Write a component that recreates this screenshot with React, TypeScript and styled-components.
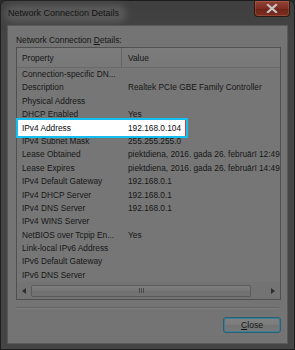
import React from 'react';
import styled, { createGlobalStyle } from 'styled-components';

type TRow = {
  property: string;
  value?: string;
  highlighted?: boolean;
};

const rows: TRow[] = [
  { property: 'Connection-specific DN...' },
  { property: 'Description', value: 'Realtek PCIe GBE Family Controller' },
  { property: 'Physical Address' },
  { property: 'DHCP Enabled', value: 'Yes' },
  { property: 'IPv4 Address', value: '192.168.0.104', highlighted: true },
  { property: 'IPv4 Subnet Mask', value: '255.255.255.0' },
  { property: 'Lease Obtained', value: 'piektdiena, 2016. gada 26. februārī 12:49:19' },
  { property: 'Lease Expires', value: 'piektdiena, 2016. gada 26. februārī 14:49:19' },
  { property: 'IPv4 Default Gateway', value: '192.168.0.1' },
  { property: 'IPv4 DHCP Server', value: '192.168.0.1' },
  { property: 'IPv4 DNS Server', value: '192.168.0.1' },
  { property: 'IPv4 WINS Server' },
  { property: 'NetBIOS over Tcpip En...', value: 'Yes' },
  { property: 'Link-local IPv6 Address' },
  { property: 'IPv6 Default Gateway' },
  { property: 'IPv6 DNS Server' },
];

const GlobalStyle = createGlobalStyle`
  body {
    margin: 0;
    background: #2b2b2b;
    font-family: "Liberation Sans", Arial, sans-serif;
  }
`;

export default function App() {
  return (
    <>
      <GlobalStyle />
      <Window>
        <TitleBar>
          <Title>Network Connection Details</Title>
          <CloseX>
            <svg width="12" height="9" viewBox="0 0 12 9">
              <path d="M2 1 L10 8 M10 1 L2 8" stroke="#c9c9c9" strokeWidth="2.2" strokeLinecap="square" />
            </svg>
          </CloseX>
        </TitleBar>
        <Client>
          <Label>
            Network Connection <u>D</u>etails:
          </Label>
          <ListBox>
            <Header>
              <HeadCell $first>Property</HeadCell>
              <HeadCell>Value</HeadCell>
            </Header>
            <Rows>
              {rows.map((r) => (
                <Row key={r.property} $highlighted={r.highlighted}>
                  <PropCell>{r.property}</PropCell>
                  <ValueCell>{r.value}</ValueCell>
                </Row>
              ))}
            </Rows>
            <ScrollBar>
              <Arrow>
                <svg width="4" height="6" viewBox="0 0 4 6">
                  <path d="M4 0 L0 3 L4 6 Z" fill="#2e2e2e" />
                </svg>
              </Arrow>
              <Track>
                <Thumb>
                  <Grip />
                </Thumb>
              </Track>
              <Arrow>
                <svg width="4" height="6" viewBox="0 0 4 6">
                  <path d="M0 0 L4 3 L0 6 Z" fill="#2e2e2e" />
                </svg>
              </Arrow>
            </ScrollBar>
          </ListBox>
          <Separator />
          <Footer>
            <Button>
              <u>C</u>lose
            </Button>
          </Footer>
        </Client>
      </Window>
    </>
  );
}

const Window = styled.div`
  width: 295px;
  height: 350px;
  box-sizing: border-box;
  display: flex;
  flex-direction: column;
  padding: 0 6px 5px 6px;
  background: linear-gradient(#3f3f3f, #444444 40px, #454545);
  border: 1px solid #1e1e1e;
  border-radius: 6px 6px 0 0;
`;

const TitleBar = styled.div`
  height: 24px;
  display: flex;
  justify-content: space-between;
  align-items: flex-start;
  flex-shrink: 0;
`;

const Title = styled.span`
  margin-top: 7px;
  margin-left: 1px;
  padding: 0 4px 0 0;
  font-family: "Liberation Sans", Arial, sans-serif;
  font-size: 9px;
  line-height: 11px;
  color: #141414;
  background: #575757;
  border-radius: 5px;
  box-shadow: 0 0 6px 4px #575757;
`;

const CloseX = styled.div`
  width: 36px;
  height: 16px;
  margin-right: -2px;
  display: flex;
  align-items: center;
  justify-content: center;
  box-sizing: border-box;
  border: 1px solid #2a1a16;
  border-top: none;
  border-radius: 0 0 4px 4px;
  background: linear-gradient(#93453a, #7d2d20 50%, #6e2217 51%, #7c3022);
  box-shadow: inset 0 0 0 1px rgba(220, 130, 110, 0.25);
`;

const Client = styled.div`
  flex: 1;
  display: flex;
  flex-direction: column;
  padding: 8px 6px 0 8px;
  background: #747474;
  border: 1px solid #595959;
`;

const Label = styled.div`
  font-size: 8.4px;
  color: #161616;
  height: 13px;
  line-height: 13px;
  u {
    text-decoration-thickness: 1px;
  }
`;

const ListBox = styled.div`
  height: 253px;
  box-sizing: border-box;
  display: flex;
  flex-direction: column;
  background: #767676;
  border: 1px solid #505050;
`;

const Header = styled.div`
  height: 20px;
  flex-shrink: 0;
  display: grid;
  grid-template-columns: 105px 1fr;
  background: linear-gradient(#7b7b7b, #787878);
  border-bottom: 1px solid #6a6a6a;
  box-sizing: border-box;
`;

const HeadCell = styled.div<{ $first?: boolean }>`
  font-size: 8.4px;
  color: #161616;
  display: flex;
  align-items: center;
  padding-left: ${(p) => (p.$first ? '5px' : '6px')};
  border-right: ${(p) => (p.$first ? '1px solid #656565' : 'none')};
`;

const Rows = styled.div`
  flex: 1;
  display: flex;
  flex-direction: column;
`;

const Row = styled.div<{ $highlighted?: boolean }>`
  position: relative;
  height: 13.4px;
  display: grid;
  grid-template-columns: 105px 1fr;
  font-size: 8.3px;
  line-height: 13.4px;
  white-space: nowrap;
  color: ${(p) => (p.$highlighted ? '#0c0c0c' : '#161616')};
  z-index: ${(p) => (p.$highlighted ? 1 : 0)};

  &::before {
    content: '';
    display: ${(p) => (p.$highlighted ? 'block' : 'none')};
    position: absolute;
    left: -1px;
    top: -4px;
    width: 172px;
    height: 20px;
    box-sizing: border-box;
    border: 2px solid #12bff0;
    background: #ffffff;
    z-index: -1;
  }

  &::after {
    content: '';
    display: ${(p) => (p.$highlighted ? 'block' : 'none')};
    position: absolute;
    left: 168px;
    top: -2px;
    width: 1px;
    height: 16px;
    background: #e8302a;
  }
`;

const PropCell = styled.div`
  padding-left: 5px;
  overflow: hidden;
`;

const ValueCell = styled.div`
  padding-left: 6px;
  overflow: hidden;
`;

const ScrollBar = styled.div`
  height: 17px;
  flex-shrink: 0;
  display: flex;
  align-items: stretch;
  background: #737373;
`;

const Arrow = styled.div`
  width: 15px;
  display: flex;
  align-items: center;
  justify-content: center;
`;

const Track = styled.div`
  flex: 1;
  display: flex;
  align-items: center;
  padding-right: 15px;
`;

const Thumb = styled.div`
  width: 220px;
  height: 12px;
  display: flex;
  align-items: center;
  justify-content: center;
  box-sizing: border-box;
  border: 1px solid #5a5a5a;
  border-radius: 2px;
  background: linear-gradient(#7e7e7e, #767676 50%, #707070 51%, #747474);
`;

const Grip = styled.div`
  width: 5px;
  height: 5px;
  background: repeating-linear-gradient(90deg, #4a4a4a 0 1px, transparent 1px 2px);
`;

const Separator = styled.div`
  margin-top: 7px;
  margin-right: 2px;
  height: 0;
  border-top: 1px solid #646464;
  border-bottom: 1px solid #7e7e7e;
`;

const Footer = styled.div`
  display: flex;
  justify-content: flex-end;
  padding-top: 8px;
`;

const Button = styled.div`
  width: 58px;
  height: 16px;
  box-sizing: border-box;
  display: flex;
  align-items: center;
  justify-content: center;
  font-size: 8.6px;
  color: #161616;
  border: 1px solid #2c5f72;
  border-radius: 3px;
  background: linear-gradient(#828282, #7b7b7b 50%, #737373 51%, #797979);
  box-shadow: inset 0 0 0 1px #3b7f96;
`;
